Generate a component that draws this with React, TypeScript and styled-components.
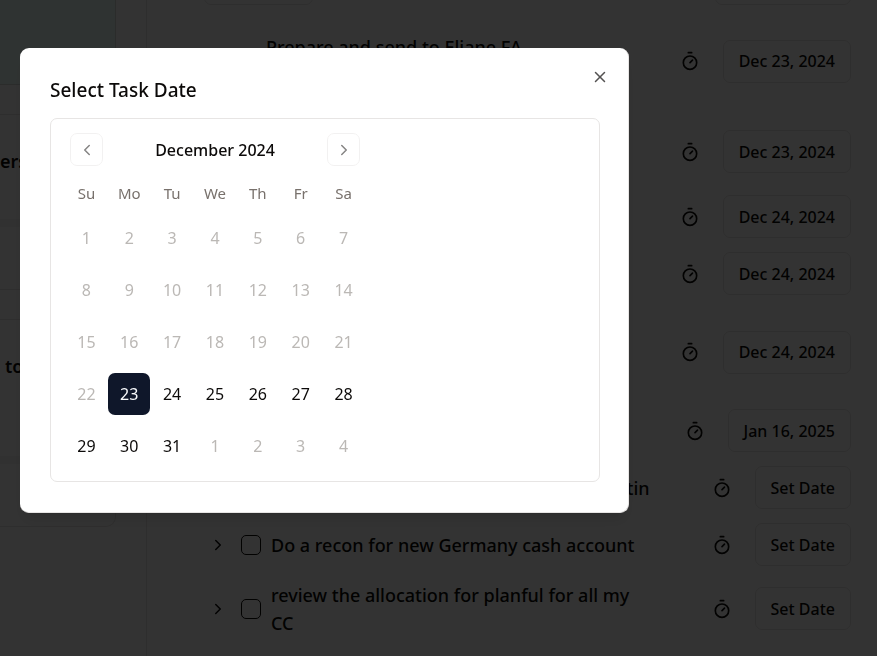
import React from "react";
import styled, { createGlobalStyle } from "styled-components";
import { ChevronLeft, ChevronRight, Timer, X } from "lucide-react";

const GlobalStyle = createGlobalStyle`
  *, *::before, *::after { box-sizing: border-box; }
  body {
    margin: 0;
    background: #ffffff;
    color: #0c0a09;
    font-family: "Noto Sans", "Open Sans", sans-serif;
  }
  button, input { font: inherit; color: inherit; }
  svg { display: block; flex: none; }
`;

const Page = styled.div`
  display: flex;
  height: 100vh;
  overflow: hidden;
`;

const Sidebar = styled.aside`
  flex: none;
  display: flex;
  flex-direction: column;
  gap: 29px;
  width: 147px;
  padding-right: 30px;
  border-right: 1px solid #e7e5e4;
`;

const Summary = styled.section`
  height: 85px;
  background: #ecfdf8;
  border: solid #d5dad8;
  border-width: 0 1px 1px 0;
`;

const Card = styled.section`
  display: flex;
  flex-direction: column;
  border: solid #e7e5e4;
  border-width: 1px 1px 1px 0;
  border-radius: 0 10px 10px 0;

  &::after {
    content: "";
    height: 70px;
    border-top: 8px solid #f5f5f5;
  }
`;

const CardTitle = styled.h2<{ $indent?: boolean; $height: number }>`
  height: ${(p) => p.$height}px;
  margin: 0;
  padding: 32px 0 0 ${(p) => (p.$indent ? 5 : 0)}px;
  overflow: hidden;
  font-size: 18px;
  line-height: 28px;
  font-weight: 600;
  white-space: nowrap;
`;

const Main = styled.main`
  flex: 1;
  min-width: 0;
  margin-top: -41px;
  padding: 0 26px 0 57px;
`;

const Row = styled.div<{ $height: number }>`
  display: flex;
  align-items: center;
  min-height: ${(p) => p.$height}px;
`;

const Expand = styled.button`
  display: flex;
  align-items: center;
  justify-content: center;
  flex: none;
  width: 28px;
  height: 28px;
  margin-right: 9px;
  padding: 0;
  border: 0;
  background: none;
`;

const TaskLabel = styled.label<{ $end?: boolean; $tight?: boolean }>`
  display: flex;
  flex: 1;
  align-items: center;
  justify-content: ${(p) => (p.$end ? "space-between" : "flex-start")};
  gap: ${(p) => (p.$tight ? 5 : 10)}px;
  min-width: 0;
  font-size: 18px;
  line-height: 28px;
  font-weight: 500;
`;

const Check = styled.input`
  appearance: none;
  flex: none;
  width: 20px;
  height: 20px;
  margin: 0;
  border: 1px solid #0c0a09;
  border-radius: 5px;
`;

const TaskTitle = styled.span<{ $raised?: boolean }>`
  padding-bottom: ${(p) => (p.$raised ? 28 : 0)}px;
`;

const TimerButton = styled.button<{ $near?: boolean }>`
  flex: none;
  margin-left: ${(p) => (p.$near ? 24 : 62)}px;
  margin-right: 23px;
  padding: 0;
  border: 0;
  background: none;
`;

const DateButton = styled.button`
  flex: none;
  height: 43px;
  padding: 0 15px;
  border: 1px solid #e7e5e4;
  border-radius: 7px;
  background: none;
  font-size: 16px;
  line-height: 24px;
  font-weight: 500;
`;

const BlankButton = styled(DateButton)<{ $width: number }>`
  width: ${(p) => p.$width}px;
  & + & { margin-left: auto; }
`;

const Overlay = styled.div`
  position: fixed;
  inset: 0;
  display: flex;
  align-items: flex-start;
  padding: 48px 248px 0 20px;
  background: rgba(0, 0, 0, 0.8);
`;

const Dialog = styled.div`
  flex: 1;
  display: flex;
  flex-direction: column;
  gap: 14px;
  padding: 28px 28px 30px 30px;
  border: 1px solid #e7e5e4;
  border-width: 0 1px 1px 0;
  border-radius: 9px;
  background: #ffffff;
  box-shadow: 0 10px 15px -3px rgba(0, 0, 0, 0.1), 0 4px 6px -4px rgba(0, 0, 0, 0.1);
`;

const DialogHeader = styled.header`
  display: flex;
  align-items: flex-start;
  justify-content: space-between;
  height: 28px;
`;

const DialogTitle = styled.h1`
  margin: 0;
  font-size: 19px;
  line-height: 28px;
  font-weight: 500;
`;

const CloseButton = styled.button`
  display: flex;
  margin: -8px -9px 0 0;
  padding: 0;
  border: 0;
  background: none;
  opacity: 0.7;
`;

const Calendar = styled.div`
  display: flex;
  padding: 14px;
  border: 1px solid #e7e5e4;
  border-radius: 7px;
`;

const Month = styled.div`
  display: flex;
  flex-direction: column;
  gap: 17px;
`;

const Caption = styled.div`
  display: flex;
  align-items: center;
  justify-content: space-between;
  padding: 0 5px;
  font-size: 16px;
  line-height: 24px;
  font-weight: 500;
`;

const NavButton = styled.button`
  display: flex;
  align-items: center;
  justify-content: center;
  width: 33px;
  height: 33px;
  padding: 0;
  border: 1px solid #e7e5e4;
  border-radius: 7px;
  background: none;
  opacity: 0.5;
`;

const DayTable = styled.table`
  border-collapse: collapse;
  table-layout: fixed;
  width: 300px;
`;

const Weekday = styled.th`
  height: 24px;
  padding: 0;
  vertical-align: top;
  color: #78716c;
  font-size: 15px;
  line-height: 21px;
  font-weight: 400;
`;

const DayCell = styled.td`
  height: 52px;
  padding: 10px 0 0;
  text-align: center;
`;

const Day = styled.button<{ $muted?: boolean; $selected?: boolean }>`
  display: block;
  width: 42px;
  height: 42px;
  margin: 0 auto;
  padding: 0;
  border: 0;
  border-radius: 7px;
  background: ${(p) => (p.$selected ? "#0f172a" : "none")};
  color: ${(p) => (p.$selected ? "#f8fafc" : p.$muted ? "#bbb8b5" : "#0c0a09")};
  font-size: 16px;
  line-height: 24px;
`;

type Task = { title?: string; date: string; height: number; end?: boolean; raised?: boolean };

const tasks: Task[] = [
  { title: "Prepare and send to Eliane FA", date: "Dec 23, 2024", height: 108, raised: true },
  { date: "Dec 23, 2024", height: 73 },
  { date: "Dec 24, 2024", height: 57 },
  { date: "Dec 24, 2024", height: 57 },
  { date: "Dec 24, 2024", height: 100 },
  { date: "Jan 16, 2025", height: 57 },
  { title: "tin", date: "Set Date", height: 57, end: true },
  { title: "Do a recon for new Germany cash account", date: "Set Date", height: 57 },
  { title: "review the allocation for planful for all my CC", date: "Set Date", height: 71 },
];

const weekdays = ["Su", "Mo", "Tu", "We", "Th", "Fr", "Sa"];
const weeks = Array.from({ length: 5 }, (_, w) => Array.from({ length: 7 }, (_, d) => w * 7 + d + 1));

export default function App() {
  return (
    <>
      <GlobalStyle />
      <Page>
        <Sidebar>
          <Summary />
          <Card>
            <CardTitle $height={104}>ers</CardTitle>
          </Card>
          <Card>
            <CardTitle $indent $height={136}>to</CardTitle>
          </Card>
        </Sidebar>
        <Main>
          <Row $height={48}>
            <BlankButton $width={109} aria-label="Filter" />
            <BlankButton $width={136} aria-label="Sort" />
          </Row>
          {tasks.map((task, i) => (
            <Row key={i} $height={task.height}>
              <Expand aria-label="Expand task">
                <ChevronRight size={18} />
              </Expand>
              <TaskLabel $end={task.end} $tight={task.raised}>
                <Check type="checkbox" />
                <TaskTitle $raised={task.raised}>{task.title}</TaskTitle>
              </TaskLabel>
              <TimerButton $near={task.raised} aria-label="Start timer">
                <Timer size={20} />
              </TimerButton>
              <DateButton>{task.date}</DateButton>
            </Row>
          ))}
        </Main>
      </Page>
      <Overlay>
        <Dialog role="dialog" aria-modal="true" aria-labelledby="dialog-title">
          <DialogHeader>
            <DialogTitle id="dialog-title">Select Task Date</DialogTitle>
            <CloseButton aria-label="Close">
              <X size={18} />
            </CloseButton>
          </DialogHeader>
          <Calendar>
            <Month>
              <Caption>
                <NavButton aria-label="Previous month">
                  <ChevronLeft size={18} />
                </NavButton>
                December 2024
                <NavButton aria-label="Next month">
                  <ChevronRight size={18} />
                </NavButton>
              </Caption>
              <DayTable>
                <thead>
                  <tr>
                    {weekdays.map((name) => (
                      <Weekday key={name} scope="col">{name}</Weekday>
                    ))}
                  </tr>
                </thead>
                <tbody>
                  {weeks.map((week) => (
                    <tr key={week[0]}>
                      {week.map((n) => (
                        <DayCell key={n}>
                          <Day $muted={n < 23 || n > 31} $selected={n === 23}>
                            {n > 31 ? n - 31 : n}
                          </Day>
                        </DayCell>
                      ))}
                    </tr>
                  ))}
                </tbody>
              </DayTable>
            </Month>
          </Calendar>
        </Dialog>
      </Overlay>
    </>
  );
}
